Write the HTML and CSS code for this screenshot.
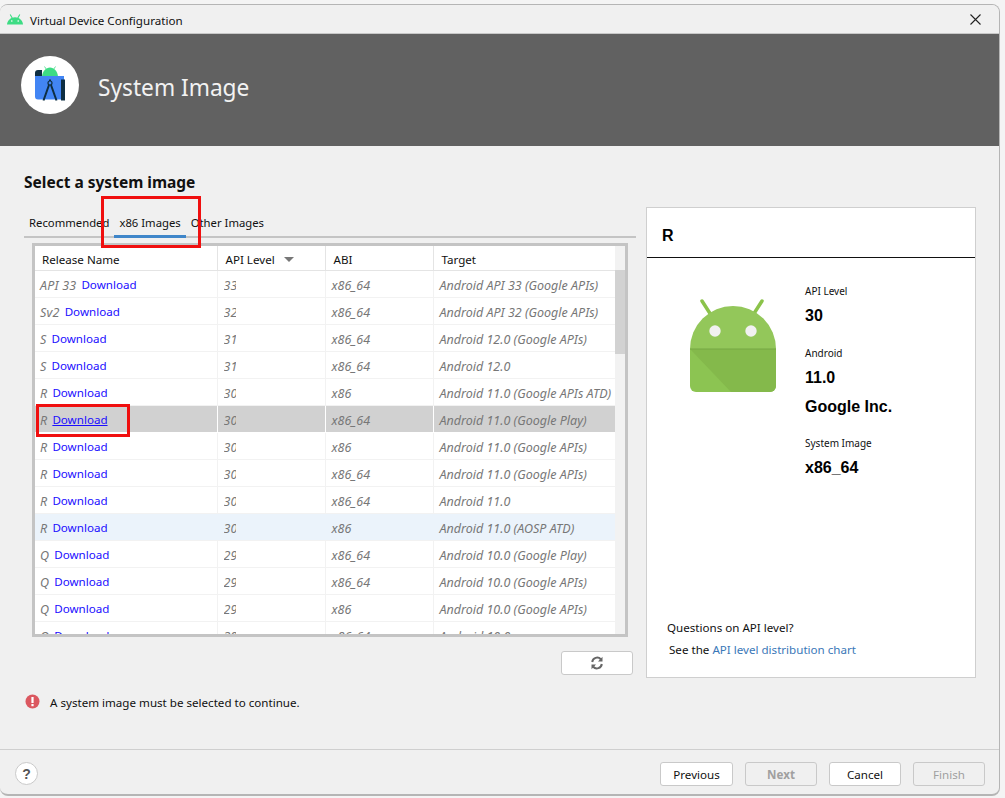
FILE: index.html
```html
<!DOCTYPE html>
<html lang="en">
<head>
  <meta charset="UTF-8">
  <title>Virtual Device Configuration</title>
  <link rel="stylesheet" href="styles.css">
</head>
<body>
  <div class="dialog">
    <!-- Title bar -->
    <div class="titlebar">
      <svg class="title-icon" width="16" height="11" viewBox="0 0 16 11">
        <path d="M0 10.5C.3 6.5 3.5 3.2 8 3.2s7.700 3.300 8 7.300z" fill="#3ddc84"/>
        <path d="M3.200 .5l2 3.500M12.800 .5l-2 3.500" stroke="#3ddc84" stroke-width="1.100"/>
        <circle cx="4.800" cy="7" r=".8" fill="#fff"/>
        <circle cx="11.200" cy="7" r=".8" fill="#fff"/>
      </svg>
      <span class="title-text">Virtual Device Configuration</span>
      <svg class="close-icon" width="11" height="11" viewBox="0 0 11 11">
        <path d="M.5 .5l10 10M10.500 .5l-10 10" stroke="#222" stroke-width="1.100" fill="none"/>
      </svg>
    </div>

    <!-- Banner -->
    <div class="banner">
      <div class="logo">
        <svg width="34" height="38" viewBox="0 0 34 38">
          <path d="M9 10.500C9.500 5 13 1.500 17 1.500S24.500 5 25 10.500z" fill="#3ddc84"/>
          <path d="M11.500 .5l2 3M22.500 .5l-2 3" stroke="#3ddc84" stroke-width=".8"/>
          <path d="M2 7c0-2 1-3 3-3h4v6H2z" fill="#0e2e42"/>
          <path d="M2 10h29v23.500H5c-2 0-3-1-3-3z" fill="#4285f4"/>
          <circle cx="17" cy="17" r="2" fill="none" stroke="#0e2e42" stroke-width="1.200"/>
          <path d="M17 13.500V15M16 19L10.500 34.500M18 19L23.500 34.500" stroke="#0e2e42" stroke-width="2" fill="none"/>
          <rect x="28" y="13.500" width="4" height="21" fill="#0e2e42"/>
        </svg>
      </div>
      <div class="banner-title">System Image</div>
    </div>

    <!-- Main content -->
    <div class="content">
      <div class="left">
        <h2 class="heading">Select a system image</h2>
        <div class="tabs">
          <span class="tab">Recommended</span>
          <span class="tab active">x86 Images</span>
          <span class="tab">Other Images</span>
        </div>
        <div class="table-box">
          <div class="table-scroll">
            <table class="images">
              <colgroup>
                <col class="col-name"><col class="col-api"><col class="col-abi"><col class="col-target">
              </colgroup>
              <thead>
                <tr>
                  <th>Release Name</th>
                  <th>API Level <span class="sort-arrow"></span></th>
                  <th>ABI</th>
                  <th>Target</th>
                </tr>
              </thead>
              <tbody>
                <tr><td><i class="rel">API 33</i><a href="#">Download</a></td><td><i class="api">33</i></td><td>x86_64</td><td>Android API 33 (Google APIs)</td></tr>
                <tr><td><i class="rel">Sv2</i><a href="#">Download</a></td><td><i class="api">32</i></td><td>x86_64</td><td>Android API 32 (Google APIs)</td></tr>
                <tr><td><i class="rel">S</i><a href="#">Download</a></td><td><i class="api">31</i></td><td>x86_64</td><td>Android 12.0 (Google APIs)</td></tr>
                <tr><td><i class="rel">S</i><a href="#">Download</a></td><td><i class="api">31</i></td><td>x86_64</td><td>Android 12.0</td></tr>
                <tr><td><i class="rel">R</i><a href="#">Download</a></td><td><i class="api">30</i></td><td>x86</td><td>Android 11.0 (Google APIs ATD)</td></tr>
                <tr class="selected"><td><i class="rel">R</i><a href="#">Download</a></td><td><i class="api">30</i></td><td>x86_64</td><td>Android 11.0 (Google Play)</td></tr>
                <tr><td><i class="rel">R</i><a href="#">Download</a></td><td><i class="api">30</i></td><td>x86</td><td>Android 11.0 (Google APIs)</td></tr>
                <tr><td><i class="rel">R</i><a href="#">Download</a></td><td><i class="api">30</i></td><td>x86_64</td><td>Android 11.0 (Google APIs)</td></tr>
                <tr><td><i class="rel">R</i><a href="#">Download</a></td><td><i class="api">30</i></td><td>x86_64</td><td>Android 11.0</td></tr>
                <tr class="hovered"><td><i class="rel">R</i><a href="#">Download</a></td><td><i class="api">30</i></td><td>x86</td><td>Android 11.0 (AOSP ATD)</td></tr>
                <tr><td><i class="rel">Q</i><a href="#">Download</a></td><td><i class="api">29</i></td><td>x86_64</td><td>Android 10.0 (Google Play)</td></tr>
                <tr><td><i class="rel">Q</i><a href="#">Download</a></td><td><i class="api">29</i></td><td>x86_64</td><td>Android 10.0 (Google APIs)</td></tr>
                <tr><td><i class="rel">Q</i><a href="#">Download</a></td><td><i class="api">29</i></td><td>x86</td><td>Android 10.0 (Google APIs)</td></tr>
                <tr><td><i class="rel">Q</i><a href="#">Download</a></td><td><i class="api">29</i></td><td>x86_64</td><td>Android 10.0</td></tr>
              </tbody>
            </table>
          </div>
          <div class="scrollbar"><div class="thumb"></div></div>
        </div>
        <div class="refresh-row">
          <button class="btn refresh" type="button">
            <svg width="14" height="14" viewBox="0 0 14 14">
              <path d="M2.200 6A5 5 0 0 1 10.800 3.200M11.800 8A5 5 0 0 1 3.200 10.800" fill="none" stroke="#666" stroke-width="2"/>
              <path d="M12.500 .8V5.500H8zM1.500 13.200V8.500H6z" fill="#666"/>
            </svg>
          </button>
        </div>
      </div>

      <!-- Details panel -->
      <div class="details">
        <div class="details-head">R</div>
        <div class="details-body">
          <svg class="android" width="88" height="94" viewBox="0 0 88 94">
            <path d="M13 2l9 14M73 2l-9 14" stroke="#8bc34a" stroke-width="3.500" stroke-linecap="round"/>
            <path d="M1 50a43 43 0 0 1 86 0z" fill="#93c75a"/>
            <path d="M1 50h86v37a6 6 0 0 1-6 6H7a6 6 0 0 1-6-6z" fill="#8cc452"/>
            <path d="M1 50h86v37a6 6 0 0 1-6 6H42z" fill="#84b94b"/>
            <rect x="1" y="49.500" width="86" height="1" fill="#76a744"/>
            <circle cx="26" cy="32" r="5.700" fill="#f1f1f1"/>
            <circle cx="62" cy="32" r="5.700" fill="#f1f1f1"/>
          </svg>
          <div class="specs">
            <div class="spec-label first">API Level</div>
            <div class="spec-value level">30</div>
            <div class="spec-label">Android</div>
            <div class="spec-value">11.0</div>
            <div class="spec-value vendor">Google Inc.</div>
            <div class="spec-label">System Image</div>
            <div class="spec-value">x86_64</div>
          </div>
        </div>
        <div class="details-foot">
          <div class="question">Questions on API level?</div>
          <div class="chart">See the <a href="#">API level distribution chart</a></div>
        </div>
      </div>
    </div>

    <!-- Validation message -->
    <div class="message">
      <svg width="15" height="15" viewBox="0 0 15 15">
        <circle cx="7.500" cy="7.500" r="7" fill="#db5860"/>
        <rect x="6.400" y="3" width="2.200" height="6" fill="#fff"/>
        <rect x="6.400" y="10" width="2.200" height="2.200" fill="#fff"/>
      </svg>
      <span>A system image must be selected to continue.</span>
    </div>

    <!-- Footer -->
    <div class="footer">
      <button class="help" type="button">?</button>
      <div class="footer-buttons">
        <button class="btn wide" type="button">Previous</button>
        <button class="btn disabled bold" type="button">Next</button>
        <button class="btn" type="button">Cancel</button>
        <button class="btn disabled" type="button">Finish</button>
      </div>
    </div>

    <!-- Red annotations -->
    <div class="mark mark-tab"></div>
    <div class="mark mark-download"></div>
  </div>
</body>
</html>
```

FILE: styles.css
```css
html, body {
  margin: 0;
  height: 798px;
  overflow: hidden;
}
body {
  background: #f4f4f4;
  font-family: "Noto Sans", Arial, sans-serif;
  font-size: 11.6px;
  color: #111;
}
.dialog {
  position: relative;
  width: 1000px;
  height: 792px;
  margin-top: 4px;
  box-sizing: border-box;
  display: flex;
  flex-direction: column;
  background: #f0f0f0;
  border: 1px solid #b5b5b5;
  border-width: 1px 1px 2px 0;
  border-radius: 8px;
  overflow: hidden;
}

/* title bar */
.titlebar {
  height: 29px;
  flex: none;
  box-sizing: border-box;
  display: flex;
  align-items: center;
  padding: 0 18px 0 7px;
  background: #f0f0f0;
  border-bottom: 1px solid #c8c8c8;
}
.title-icon { margin-right: 7px; }
.title-text { flex: 1; padding-top: 2px; }

/* banner */
.banner {
  height: 112px;
  flex: none;
  display: flex;
  align-items: center;
  background: #616161;
  padding: 0 0 10px 21px;
  box-sizing: border-box;
}
.logo {
  width: 58px;
  height: 58px;
  border-radius: 50%;
  background: #fff;
  display: flex;
  align-items: center;
  justify-content: center;
  margin-right: 19px;
}
.banner-title {
  font-size: 22.700px;
  color: #f2f2f2;
  padding-top: 5px;
}

/* main content */
.content {
  flex: none;
  height: 532px;
  display: flex;
  padding: 28px 0 0 24px;
  box-sizing: border-box;
}
.left {
  flex: none;
  width: 612px;
  margin-right: 10px;
}
.heading {
  margin: 0;
  height: 33px;
  font-size: 15.500px;
  line-height: 16px;
  font-weight: bold;
  color: #111;
}
.tabs {
  display: flex;
  height: 31px;
  border-bottom: 2px solid #c4c4c4;
  box-sizing: border-box;
  font-size: 11.300px;
}
.tab {
  padding: 7px 5px 0;
  line-height: 17px;
}
.tab.active {
  margin-bottom: -2px;
  border-bottom: 3px solid #3f86c9;
}
.table-box {
  display: flex;
  width: 596px;
  height: 394px;
  margin: 5px 0 0 8px;
  box-sizing: border-box;
  border: 3px solid #c4c4c4;
  background: #fff;
}
.table-scroll {
  width: 580px;
  overflow: hidden;
}
.scrollbar {
  flex: 1;
  background: #f2f2f2;
  padding-top: 24px;
}
.thumb {
  height: 84px;
  background: #d2d2d2;
}
.images {
  width: 580px;
  table-layout: fixed;
  border-collapse: collapse;
}
.col-name { width: 182px; }
.col-api { width: 108px; }
.col-abi { width: 108px; }
.col-target { width: 182px; }
.images th {
  height: 22px;
  padding: 2px 0 0 8px;
  text-align: left;
  font-weight: normal;
  border-bottom: 1px solid #e4e4e4;
  border-left: 1px solid #e4e4e4;
  white-space: nowrap;
}
.images th:first-child { border-left: 0; padding-left: 7px; }
.sort-arrow {
  display: inline-block;
  margin-left: 6px;
  vertical-align: 2px;
  border: 5px solid transparent;
  border-top: 5px solid #777;
  border-bottom: 0;
}
.images td {
  height: 24px;
  padding: 2px 0 0 6px;
  border-bottom: 1px solid #f2f2f2;
  border-left: 1px solid #f2f2f2;
  font-size: 12.500px;
  font-style: italic;
  color: #777;
  white-space: nowrap;
  overflow: hidden;
}
.images td:first-child { border-left: 0; padding-left: 5px; }
.images a {
  font-size: 11.600px;
  font-style: normal;
  color: #1a0dff;
  text-decoration: none;
  vertical-align: 1px;
}
.rel {
  display: inline-block;
  margin-right: 5px;
  letter-spacing: .2px;
  vertical-align: bottom;
}
.api {
  display: inline-block;
  width: 12px;
  overflow: hidden;
  vertical-align: bottom;
}
tr.selected td {
  background: #d1d1d1;
  border-bottom-color: #fff;
  border-left-color: #fff;
}
tr.selected a { text-decoration: underline; }
tr.hovered td {
  background: #ebf3fb;
  border-left-color: #ebf3fb;
}
.refresh-row {
  display: flex;
  justify-content: flex-end;
  padding: 14px 3px 0 0;
}

/* buttons */
.btn {
  width: 72px;
  height: 24px;
  padding: 0;
  border: 1px solid #c9c9c9;
  border-radius: 3px;
  background: #fff;
  font: 11.600px "Noto Sans", Arial, sans-serif;
  color: #111;
}
.btn.wide { width: 73px; }
.refresh {
  display: flex;
  align-items: center;
  justify-content: center;
}
.btn.disabled {
  background: #f0f0f0;
  color: #a0a0a0;
}
.btn.bold { font-weight: bold; }

/* details panel */
.details {
  flex: none;
  width: 330px;
  height: 471px;
  box-sizing: border-box;
  margin-top: 33px;
  background: #fff;
  border: 1px solid #cfcfcf;
  display: flex;
  flex-direction: column;
}
.details-head {
  height: 50px;
  flex: none;
  box-sizing: border-box;
  padding: 19px 0 0 15px;
  border-bottom: 1px solid #111;
  font: bold 16px/18px "Liberation Sans", Arial, sans-serif;
  color: #000;
}
.details-body {
  flex: 1;
  display: flex;
  padding-top: 24px;
}
.android {
  margin: 17px 0 0 42px;
}
.specs {
  margin-left: 28px;
}
.spec-label {
  margin-top: 20px;
  height: 14px;
  font-size: 10px;
  line-height: 14px;
}
.spec-label.first { margin-top: 2px; }
.spec-value {
  margin-top: 9px;
  font: bold 16px/18px "Liberation Sans", Arial, sans-serif;
  color: #000;
}
.spec-value.level { padding-bottom: 1px; }
.spec-value.vendor { margin-top: 11px; }
.details-foot {
  padding: 0 0 19px 20px;
}
.question { line-height: 17px; }
.chart {
  margin: 5px 0 0 2px;
  line-height: 17px;
}
.chart a {
  color: #3a78b8;
  text-decoration: none;
}

/* validation message */
.message {
  flex: none;
  height: 72px;
  box-sizing: border-box;
  display: flex;
  align-items: flex-start;
  gap: 10px;
  padding: 17px 0 0 25px;
  margin-top: -1px;
}
.message span { line-height: 16px; padding-top: 1px; }

/* footer */
.footer {
  flex: 1;
  display: flex;
  align-items: flex-start;
  justify-content: space-between;
  padding: 12px 14px 0 15px;
  border-top: 1px solid #cfcfcf;
}
.help {
  width: 23px;
  height: 23px;
  padding: 0;
  border: 1px solid #c9c9c9;
  border-radius: 50%;
  background: #fff;
  font: bold 14px "Liberation Sans", Arial, sans-serif;
  color: #555;
}
.footer-buttons {
  display: flex;
  gap: 12px;
}

/* red annotations over the screenshot */
.mark {
  position: absolute;
  box-sizing: border-box;
  border: 3px solid #f00f0f;
}
.mark-tab {
  left: 101px;
  top: 191px;
  width: 100px;
  height: 52px;
}
.mark-download {
  left: 36px;
  top: 399px;
  width: 94px;
  height: 33px;
}
```
